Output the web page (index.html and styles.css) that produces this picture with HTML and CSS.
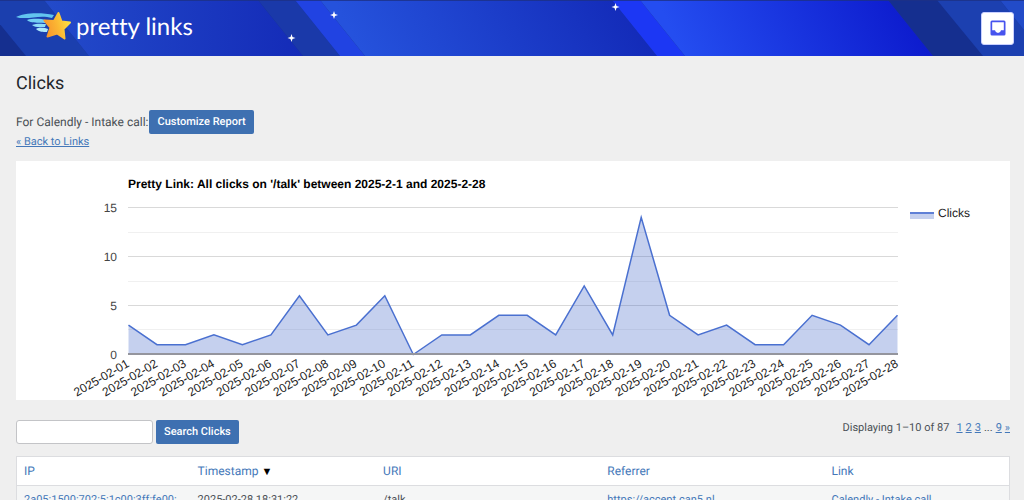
FILE: index.html
```
<!DOCTYPE html>
<html lang="en">
<head>
<meta charset="utf-8">
<meta name="viewport" content="width=device-width, initial-scale=1">
<title>Clicks - Pretty Links</title>
<link rel="stylesheet" href="styles.css">
</head>
<body>
<header class="banner">
  <svg class="banner-art" viewBox="0 0 1024 56" preserveAspectRatio="none" aria-hidden="true">
    <defs>
      <linearGradient id="g1" x1="0" y1="0" x2="1" y2="0"><stop offset="0" stop-color="#234bca"/><stop offset="1" stop-color="#142bb8"/></linearGradient>
      <linearGradient id="g2" gradientUnits="userSpaceOnUse" x1="365" y1="56" x2="600" y2="-80"><stop offset="0" stop-color="#2552dc"/><stop offset="1" stop-color="#1228b6"/></linearGradient>
      <linearGradient id="g3" gradientUnits="userSpaceOnUse" x1="685" y1="56" x2="890" y2="-50"><stop offset="0" stop-color="#244df0"/><stop offset="1" stop-color="#0c19cc"/></linearGradient>
    </defs>
    <path fill="#152f8f" d="M0 0H1024V56H0z"/>
    <path fill="#1b3fae" d="M-20 0H44L89 56H26z"/>
    <path fill="url(#g1)" d="M44 0H258L303 56H89z"/>
    <path fill="#1a39a9" d="M258 0H295L340 56H303z"/>
    <path fill="#2143e2" d="M295 0H320L365 56H340z"/>
    <path fill="url(#g2)" d="M320 0H612L657 56H365z"/>
    <path fill="#1c37f4" d="M612 0H640L685 56H657z"/>
    <path fill="url(#g3)" d="M640 0H888L933 56H685z"/>
    <path fill="#1c40b0" d="M937 0H1000L1045 56H983z"/>
    <path fill="#224bc8" d="M1000 0H1024V30z"/>
    <path fill="#1d3184" opacity=".8" d="M0 0H1024V1H0z"/>
    <g fill="#fff">
      <path d="M334 11l1 3 3 1-3 1-1 3-1-3-3-1 3-1z"/>
      <path d="M291.500 34l1 3 3 1-3 1-1 3-1-3-3-1 3-1z"/>
      <path d="M615.500 3l1 3 3 1-3 1-1 3-1-3-3-1 3-1z"/>
    </g>
  </svg>
  <a class="brand" href="#" aria-label="pretty links">
    <svg class="brand-mark" viewBox="0 0 56 30" aria-hidden="true">
      <defs><linearGradient id="star" x1="0" y1="0.600" x2="1" y2="0.300"><stop offset="0" stop-color="#f7952c"/><stop offset=".5" stop-color="#fbb733"/><stop offset="1" stop-color="#fde244"/></linearGradient></defs>
      <path fill="#62c4ef" d="M0 5C7 1 24 0 38 3L36 6C26 3 17 6 9 6C5 6 2 6 0 5z"/>
      <path fill="#73cff3" d="M11 8C18 6 25 7 30 8L29 11C23 10 15 12 11 8z"/>
      <path fill="#8ddcf7" d="M16 13C21 11 27 12 30 12L29 15C25 15 19 16 16 13z"/>
      <path fill="#aee9fb" d="M20 17C24 15 29 16 32 17L31 20C27 20 23 20 20 17z"/>
      <path fill="url(#star)" stroke="url(#star)" stroke-width="2" stroke-linejoin="round" d="M42.500 1L45.500 9.500L54 10.500L47.500 17L48.500 26.500L41 21.500L31.500 24.500L34.500 15.500L28.500 8.500L38 9z"/>
    </svg>
    <span class="brand-name">pretty links</span>
  </a>
  <button class="inbox" type="button" aria-label="Inbox">
    <svg viewBox="0 0 16 16" aria-hidden="true"><path fill="#4653ee" fill-rule="evenodd" d="M2 0.500H14Q15.500 .5 15.500 2V14Q15.500 15.500 14 15.500H2Q.5 15.500 .5 14V2Q.5 .5 2 .5zM2.200 2.200V10.300H5Q5.500 13 8 13T11 10.300H13.800V2.200z"/></svg>
  </button>
</header>
<main class="page">
  <h1 class="title">Clicks</h1>
  <div class="report">
    <span>For Calendly - Intake call:</span>
    <button class="button" type="button">Customize Report</button>
  </div>
  <a class="back" href="#">« Back to Links</a>
  <section class="chart-card">
    <svg class="chart" viewBox="0 0 994 239" role="img" aria-label="All clicks by day">
      <text class="chart-title" x="112" y="27">Pretty Link: All clicks on '/talk' between 2025-2-1 and 2025-2-28</text>
      <g class="grid-minor"><path d="M112 71.500H882M112 120.500H882M112 168.500H882"/></g>
      <g class="grid-major"><path d="M112 46.500H882M112 95.500H882M112 144.500H882"/></g>
      <g class="value-labels"><text x="101" y="51">15</text><text x="101" y="100">10</text><text x="101" y="149">5</text><text x="101" y="198">0</text></g>
      <g id="plot"></g>
      <path class="axis" d="M112 193H882"/>
      <g class="date-labels" id="dates"></g>
      <path class="area" d="M894 52H918V58H894z"/>
      <path class="line" d="M894 52H918"/>
      <text class="legend" x="922" y="56">Clicks</text>
    </svg>
  </section>
  <div class="toolbar">
    <form class="search">
      <input class="search-box" type="text" aria-label="Search clicks">
      <button class="button" type="button">Search Clicks</button>
    </form>
    <nav class="pager" aria-label="Pages">
      <span class="count">Displaying 1–10 of 87</span>
      <a href="#">1</a><a href="#">2</a><a href="#">3</a><span>...</span><a href="#">9</a><a href="#">»</a>
    </nav>
  </div>
  <table class="clicks">
    <colgroup><col class="c-ip"><col class="c-time"><col class="c-uri"><col class="c-ref"><col class="c-link"></colgroup>
    <thead><tr>
      <th><a href="#">IP</a></th>
      <th><a href="#">Timestamp <span class="sort">▼</span></a></th>
      <th><a href="#">URI</a></th>
      <th><a href="#">Referrer</a></th>
      <th><a href="#">Link</a></th>
    </tr></thead>
    <tbody><tr>
      <td><a href="#">2a05:1500:702:5:1c00:3ff:fe00:</a></td>
      <td>2025-02-28 18:31:22</td>
      <td>/talk</td>
      <td><a href="#">https://accept.can5.nl</a></td>
      <td><a href="#">Calendly - Intake call</a></td>
    </tr></tbody>
  </table>
</main>
<script src="chart.js"></script>
</body>
</html>
```
FILE: styles.css
```
* { box-sizing: border-box; }
body {
  margin: 0;
  height: 100vh;
  overflow: hidden;
  background: #efefef;
  color: #4a4f55;
  font: 11px/16px Roboto, sans-serif;
  text-rendering: geometricPrecision;
}
a { color: #4478b9; }
button, input { font: inherit; text-rendering: inherit; }

.banner {
  position: relative;
  display: flex;
  align-items: center;
  justify-content: space-between;
  height: 56px;
  padding: 0 10px 0 16px;
}
.banner-art {
  position: absolute;
  inset: 0;
  width: 100%;
  height: 100%;
  z-index: -1;
}
.brand {
  display: flex;
  align-items: center;
  gap: 4px;
  padding-bottom: 2px;
  color: #fff;
  text-decoration: none;
}
.brand-mark { width: 56px; height: 30px; }
.brand-name { font: 24px/32px Lato, sans-serif; font-variant-ligatures: none; }
.inbox {
  display: grid;
  place-items: center;
  width: 33px;
  height: 33px;
  padding: 0;
  border: 1px solid #c9d0ff;
  border-radius: 3px;
  background: #fff;
}
.inbox svg { width: 16px; height: 16px; }

.page { padding: 16px 14px 0 16px; }
.title {
  margin: 0 0 14px;
  color: #23272c;
  font: 400 18px/24px Roboto, sans-serif;
}
.report { display: flex; align-items: center; gap: 1px; font-size: 12px; }
.button {
  height: 24px;
  padding: 0 8px;
  border: 0;
  border-radius: 2px;
  background: #3e70b1;
  color: #fff;
  font-size: 11px;
  font-weight: 500;
}
.back { display: block; width: max-content; }

.chart-card { margin-top: 11px; background: #fff; }
.chart {
  display: block;
  width: 100%;
  font-family: "Liberation Sans", Arial, sans-serif;
  font-size: 12px;
}
.chart-title { fill: #000; font-weight: 700; }
.value-labels { fill: #444; text-anchor: end; }
.date-labels, .legend { fill: #222; }
.date-labels { text-anchor: end; }
.grid-major { stroke: #d9d9d9; }
.grid-minor { stroke: #f0f0f0; }
.axis { stroke: #94959d; stroke-width: 2; }
.area { fill: #3f64c6; fill-opacity: .3; }
.line { fill: none; stroke: #5f80d6; stroke-width: 2; }
#plot .line { stroke: #4a70d0; stroke-width: 1.500; }

.toolbar {
  display: flex;
  align-items: flex-start;
  justify-content: space-between;
  margin: 20px 0 12px;
}
.search { display: flex; gap: 3px; }
.search-box {
  width: 137px;
  height: 24px;
  padding: 0 6px;
  border: 1px solid #c3c4c7;
  border-radius: 3px;
  background: #fff;
}
.pager { display: flex; gap: 3px; }
.count { margin-right: 4px; }

.clicks {
  width: 100%;
  table-layout: fixed;
  border-collapse: separate;
  border-spacing: 0;
  border: 1px solid #dcdde0;
  background: #fff;
}
.clicks th, .clicks td { padding: 6px 7px; text-align: left; font-weight: 400; }
.clicks th { border-bottom: 1px solid #dcdde0; font-size: 12px; line-height: 16px; }
.clicks tbody { background: #f5f6f6; }
.clicks a { text-decoration: none; }
.clicks td { white-space: nowrap; }
.sort { color: #000; font-size: 11px; line-height: 1; }
.c-ip { width: 17.500%; }
.c-time { width: 18.700%; }
.c-uri, .c-ref { width: 22.600%; }
```
FILE: chart.js
```
const clicks = [3, 1, 1, 2, 1, 2, 6, 2, 3, 6, 0, 2, 2, 4, 4, 2, 7, 2, 14, 4, 2, 3, 1, 1, 4, 3, 1, 4];
const left = 112.5, right = 881.5, base = 193.5, unit = 9.8;
const xAt = i => left + i * (right - left) / (clicks.length - 1);
const points = clicks.map((n, i) => `${xAt(i).toFixed(1)} ${(base - n * unit).toFixed(1)}`).join("L");
document.getElementById("plot").innerHTML =
  `<path class="area" d="M${left} ${base}L${points}L${right} ${base}z"/><path class="line" d="M${points}"/>`;
document.getElementById("dates").innerHTML = clicks.map((n, i) =>
  `<text transform="translate(${(xAt(i) + 1.5).toFixed(1)} 205) rotate(-30)">2025-02-${String(i + 1).padStart(2, "0")}</text>`).join("");
```
